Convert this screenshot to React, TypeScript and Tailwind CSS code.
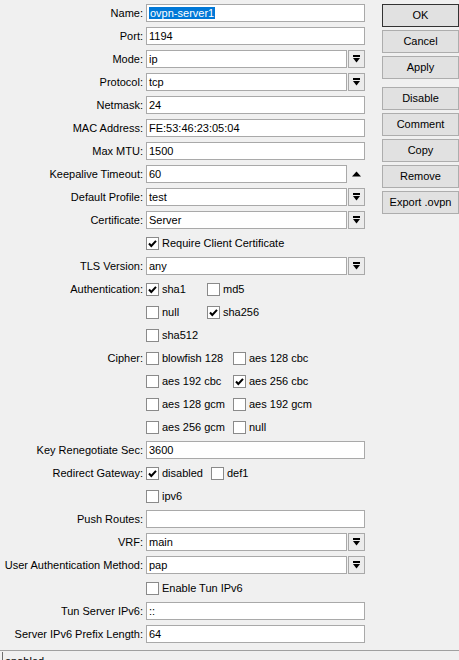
import React from 'react';

const ComboArrow: React.FC = () => (
  <svg width="9" height="9" viewBox="0 0 9 9" className="block">
    <rect x="1" y="0" width="7" height="2" fill="#000" />
    <polygon points="1,3 8,3 4.5,7.5" fill="#000" />
  </svg>
);

const CheckMark: React.FC = () => (
  <svg width="11" height="11" viewBox="0 0 11 11" className="block">
    <path d="M2 5.5 L4.3 8 L9 2.8" stroke="#000" strokeWidth="2" fill="none" />
  </svg>
);

const Label: React.FC<{ text?: string }> = ({ text }) => (
  <div className="w-[143px] shrink-0 text-right leading-[18px] whitespace-nowrap">{text ? `${text}:` : ''}</div>
);

const TextBox: React.FC<{ value?: React.ReactNode; width?: string }> = ({ value, width = 'w-[219px]' }) => (
  <div className={`${width} h-[18px] ml-[3px] bg-white border border-[#a9a9a9] pl-[2px] leading-[16px] whitespace-nowrap overflow-hidden`}>
    {value}
  </div>
);

const Combo: React.FC<{ value: string }> = ({ value }) => (
  <div className="flex ml-[3px]">
    <div className="w-[201px] h-[18px] bg-white border border-[#a9a9a9] pl-[2px] leading-[16px]">{value}</div>
    <div className="w-[17px] h-[18px] ml-[1px] bg-[#ececec] border border-[#a9a9a9] flex items-center justify-center">
      <ComboArrow />
    </div>
  </div>
);

const Check: React.FC<{ label: string; checked?: boolean; width?: string }> = ({ label, checked, width }) => (
  <div className={`flex items-center h-[18px] ${width ?? ''}`}>
    <div className="w-[13px] h-[13px] bg-white border border-[#8a8a8a] flex items-center justify-center">
      {checked && <CheckMark />}
    </div>
    <span className="ml-[3px] leading-[18px] whitespace-nowrap">{label}</span>
  </div>
);

const Row: React.FC<{ label?: string; children: React.ReactNode }> = ({ label, children }) => (
  <div className="flex items-center h-[18px]">
    <Label text={label} />
    {children}
  </div>
);

const CheckRow: React.FC<{ label?: string; col: string; items: [string, boolean][] }> = ({ label, col, items }) => (
  <Row label={label}>
    <div className="flex ml-[3px]">
      {items.map(([name, on], i) => (
        <Check key={name} label={name} checked={on} width={i === 0 ? col : undefined} />
      ))}
    </div>
  </Row>
);

const buttons = ['OK', 'Cancel', 'Apply', 'Disable', 'Comment', 'Copy', 'Remove', 'Export .ovpn'];

export default function App() {
  return (
    <div className="w-[459px] h-[660px] overflow-hidden bg-[#f0f0f0] text-[11px] text-black font-['Liberation_Sans',Arial,sans-serif] flex flex-col">
      <div className="flex pt-[4px]">
        <div className="w-[365px] flex flex-col gap-[5px]">
          <Row label="Name">
            <TextBox
              value={<span className="bg-[#0078d7] text-white px-[1px]">ovpn-server1</span>}
            />
          </Row>
          <Row label="Port"><TextBox value="1194" /></Row>
          <Row label="Mode"><Combo value="ip" /></Row>
          <Row label="Protocol"><Combo value="tcp" /></Row>
          <Row label="Netmask"><TextBox value="24" /></Row>
          <Row label="MAC Address"><TextBox value="FE:53:46:23:05:04" /></Row>
          <Row label="Max MTU"><TextBox value="1500" /></Row>
          <Row label="Keepalive Timeout">
            <TextBox value="60" width="w-[201px]" />
            <div className="w-[18px] flex justify-center">
              <svg width="9" height="6" viewBox="0 0 9 6" className="block">
                <polygon points="0,5.5 9,5.5 4.5,0.5" fill="#000" />
              </svg>
            </div>
          </Row>
          <Row label="Default Profile"><Combo value="test" /></Row>
          <Row label="Certificate"><Combo value="Server" /></Row>
          <Row>
            <div className="ml-[3px]"><Check label="Require Client Certificate" checked /></div>
          </Row>
          <Row label="TLS Version"><Combo value="any" /></Row>
          <CheckRow label="Authentication" col="w-[61px]" items={[['sha1', true], ['md5', false]]} />
          <CheckRow col="w-[61px]" items={[['null', false], ['sha256', true]]} />
          <CheckRow col="w-[61px]" items={[['sha512', false]]} />
          <CheckRow label="Cipher" col="w-[87px]" items={[['blowfish 128', false], ['aes 128 cbc', false]]} />
          <CheckRow col="w-[87px]" items={[['aes 192 cbc', false], ['aes 256 cbc', true]]} />
          <CheckRow col="w-[87px]" items={[['aes 128 gcm', false], ['aes 192 gcm', false]]} />
          <CheckRow col="w-[87px]" items={[['aes 256 gcm', false], ['null', false]]} />
          <Row label="Key Renegotiate Sec"><TextBox value="3600" /></Row>
          <CheckRow label="Redirect Gateway" col="w-[65px]" items={[['disabled', true], ['def1', false]]} />
          <CheckRow col="w-[65px]" items={[['ipv6', false]]} />
          <Row label="Push Routes"><TextBox value="" /></Row>
          <Row label="VRF"><Combo value="main" /></Row>
          <Row label="User Authentication Method"><Combo value="pap" /></Row>
          <Row>
            <div className="ml-[3px]"><Check label="Enable Tun IPv6" /></div>
          </Row>
          <Row label="Tun Server IPv6"><TextBox value="::" /></Row>
          <Row label="Server IPv6 Prefix Length"><TextBox value="64" /></Row>
        </div>
        <div className="ml-[17px] w-[77px] flex flex-col">
          {buttons.map((b, i) => (
            <div
              key={b}
              className={`h-[23px] flex items-center justify-center bg-[#e1e1e1] border whitespace-nowrap ${
                i === 0 ? 'border-[#333333]' : 'border-[#adadad]'
              } ${i === 0 ? '' : i === 3 ? 'mt-[8px]' : 'mt-[3px]'}`}
            >
              {b}
            </div>
          ))}
        </div>
      </div>
      <div className="mt-[7px] border-t border-[#a0a0a0] pt-[1px] pl-[2px] flex-1">
        <div className="h-full border-l border-[#6d6d6d] pl-[2px] pt-[2px] leading-[14px]">enabled</div>
      </div>
    </div>
  );
}
